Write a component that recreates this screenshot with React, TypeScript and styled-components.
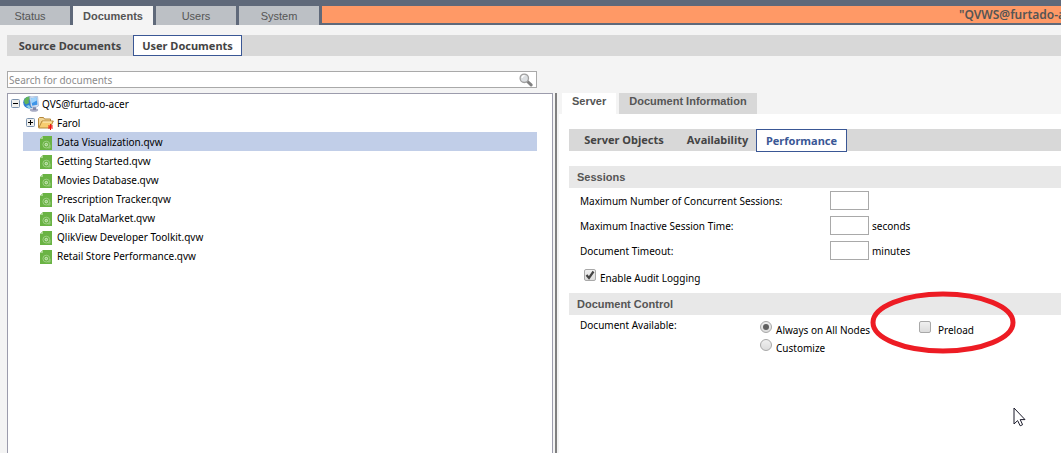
import React from "react";
import styled, { createGlobalStyle } from "styled-components";

const GlobalStyle = createGlobalStyle`
  *, *::before, *::after { box-sizing: border-box; }
  body {
    margin: 0;
    background: #f4f4f4;
    color: #000;
    font: 10px/14px "Noto Sans", "Open Sans", sans-serif;
    overflow: hidden;
  }
  button, input { font: inherit; color: inherit; margin: 0; padding: 0; }
  ul { list-style: none; margin: 0; padding: 0; }
`;

const Page = styled.div`
  display: flex;
  flex-direction: column;
  min-height: 100vh;
`;

const TopBar = styled.header`
  display: flex;
  gap: 3px;
  height: 25px;
  padding-top: 6px;
  background: #5f697a;
`;

const MainTab = styled.button<{ $active?: boolean; $first?: boolean }>`
  flex: none;
  width: ${(p) => (p.$first ? 70 : 80)}px;
  height: 19px;
  padding-right: ${(p) => (p.$first ? 10 : 0)}px;
  border: 0;
  background: ${(p) => (p.$active ? "#f4f4f4" : "#bcc0c5")};
  color: #555;
  font: ${(p) => (p.$active ? "bold " : "")}11px/18px "Liberation Sans", Arial, sans-serif;
`;

const Banner = styled.div`
  flex: 1;
  min-width: 0;
  height: 17px;
  display: flex;
  justify-content: flex-end;
  background: #ff9966;
`;

const BannerText = styled.span`
  width: 102px;
  overflow: hidden;
  white-space: nowrap;
  color: #555;
  font-size: 12px;
  font-weight: 600;
  line-height: 17px;
`;

const SubBar = styled.nav`
  display: flex;
  height: 21px;
  margin: 10px 0 0 7px;
  background: #d8d8d8;
`;

const PaneSubBar = styled(SubBar)`
  height: 22px;
  margin: 15px 0 0 10px;
`;

const SubTab = styled.button<{ $width: number; $active?: boolean; $blue?: boolean }>`
  flex: none;
  width: ${(p) => p.$width}px;
  height: ${(p) => (p.$blue ? 23 : 21)}px;
  border: 1px solid ${(p) => (p.$active ? "#3a5795" : "transparent")};
  background: ${(p) => (p.$active ? "#fff" : "transparent")};
  color: ${(p) => (p.$blue ? "#3a5795" : "#444")};
  font-size: 11px;
  font-weight: bold;
  line-height: 19px;
  white-space: nowrap;
`;

const Columns = styled.main`
  flex: 1;
  display: grid;
  grid-template-columns: minmax(0, 1fr) 506px;
  padding-top: 15px;
`;

const LeftColumn = styled.section`
  display: flex;
  flex-direction: column;
  gap: 5px;
  padding: 0 2px 0 7px;
`;

const SearchBox = styled.label`
  display: flex;
  align-items: center;
  height: 17px;
  margin-right: 16px;
  padding: 0 3px 0 1px;
  border: 1px solid #a9a9a9;
  background: #fff;
`;

const SearchInput = styled.input`
  flex: 1;
  min-width: 0;
  height: 15px;
  border: 0;
  outline: 0;
  background: transparent;
  &::placeholder { color: #8c8c8c; opacity: 1; }
`;

const Tree = styled.ul`
  && { padding: 0 15px 0 3px; }
  flex: 1;
  border: 1px solid #9c9cac;
  border-bottom: 0;
  background: #fff;
`;

const Branch = styled.ul`
  && { padding-left: 12px; }
`;

const TreeRow = styled.div<{ $selected?: boolean }>`
  display: flex;
  align-items: center;
  height: 19px;
  background: ${(p) => (p.$selected ? "#c1cee8" : "transparent")};
`;

const Expander = styled.button`
  width: 9px;
  height: 9px;
  border: 0;
  background: none;
  display: flex;
  margin-right: 3px;
`;

const FolderRow = styled(TreeRow)`
  padding-left: 3px;
`;

const IconSlot = styled.span<{ $doc?: boolean }>`
  display: flex;
  justify-content: center;
  width: ${(p) => (p.$doc ? 34 : 16)}px;
  padding: ${(p) => (p.$doc ? "2px 0 0 12px" : "0")};
  margin-right: ${(p) => (p.$doc ? 0 : 3)}px;
`;

const RightColumn = styled.section`
  position: relative;
  display: flex;
  flex-direction: column;
  margin-top: 22px;
  border-left: 2px solid #808080;
`;

const PaneTabs = styled.nav`
  display: flex;
  gap: 3px;
  height: 21px;
  padding-left: 5px;
`;

const PaneTab = styled.button<{ $active?: boolean }>`
  height: 21px;
  padding: 0 10px 4px;
  border: 0;
  background: ${(p) => (p.$active ? "#fff" : "#d8d8d8")};
  color: #555;
  font: bold 11px/17px "Liberation Sans", Arial, sans-serif;
  white-space: nowrap;
`;

const Pane = styled.div`
  flex: 1;
  margin-left: 2px;
  background: #fff;
`;

const SectionTitle = styled.h2`
  height: 22px;
  margin: 0 0 0 10px;
  padding-left: 8px;
  background: #e8e8e8;
  color: #555;
  font: bold 11px/22px "Liberation Sans", Arial, sans-serif;
`;

const Sessions = styled.section`
  padding-top: 15px;
`;

const Fields = styled.div`
  display: flex;
  flex-direction: column;
  gap: 6px;
  padding: 3px 0 0 21px;
`;

const Field = styled.label`
  display: grid;
  grid-template-columns: 250px 39px auto;
  align-items: center;
  height: 19px;
`;

const NumberInput = styled.input`
  width: 39px;
  height: 19px;
  border: 1px solid #a9a9a9;
  background: #fff;
`;

const Unit = styled.span`
  padding-left: 3px;
`;

const Option = styled.label<{ $gap: number }>`
  display: flex;
  align-items: flex-start;
  gap: ${(p) => p.$gap}px;
  height: 18px;
  white-space: nowrap;
`;

const OptionText = styled.span`
  padding-top: 2px;
`;

const AuditOption = styled(Option)`
  height: 24px;
  margin: 9px 0 0 25px;
`;

const Tick = styled.input`
  appearance: none;
  position: relative;
  flex: none;
  width: 12px;
  height: 12px;
  border: 1px solid #a8a8a8;
  border-radius: 2px;
  background: linear-gradient(#f0f0f0, #dcdcdc);
  &[type="radio"] { border-radius: 50%; }
  &[type="radio"]:checked::after {
    content: "";
    position: absolute;
    inset: 2px;
    border-radius: 50%;
    background: #606060;
  }
`;

const TickWrap = styled.span`
  position: relative;
  display: flex;
  svg { position: absolute; left: 1px; top: 0; pointer-events: none; }
`;

const Availability = styled.div`
  display: grid;
  grid-template-columns: 180px 159px auto;
  padding: 3px 0 0 21px;
`;

const OptionList = styled.div`
  padding-top: 3px;
`;

const PreloadCell = styled.div`
  position: relative;
  padding-top: 3px;
`;

const Highlight = styled.svg`
  position: absolute;
  left: -49px;
  top: -27px;
  pointer-events: none;
`;

const Pointer = styled.svg`
  position: absolute;
  left: 456px;
  top: 314px;
  pointer-events: none;
`;

function Magnifier() {
  return (
    <svg width="14" height="14" viewBox="0 0 14 14" aria-hidden="true">
      <path d="M8.5 8.5l3.6 3.4" stroke="#808080" strokeWidth="3" strokeLinecap="round" />
      <circle cx="5.3" cy="5.3" r="4.2" fill="#dcdfe2" stroke="#a0a0a0" strokeWidth="1.3" />
      <path d="M3 5a2.6 2.6 0 0 1 2.6-2.4" fill="none" stroke="#fff" strokeWidth="1.2" />
    </svg>
  );
}

function PlusMinus({ open }: { open?: boolean }) {
  return (
    <svg width="9" height="9" viewBox="0 0 9 9" aria-hidden="true">
      <rect x="0.5" y="0.5" width="8" height="8" rx="1" fill="#f1f1ee" stroke="#7b92ae" />
      <path d={open ? "M2 4.5h5" : "M2 4.5h5M4.5 2v5"} stroke="#000" />
    </svg>
  );
}

function ServerIcon() {
  return (
    <svg width="16" height="16" viewBox="0 0 16 16" aria-hidden="true">
      <circle cx="6.2" cy="6.5" r="6" fill="#2f7fd0" />
      <path d="M1 4Q3 .6 6.5.6L8 2 5.5 4.5 6 7 3 8.5 1.5 7z" fill="#62b45a" />
      <path d="M3 10l3-1 2 3-2 .5z" fill="#8fd0e8" />
      <ellipse cx="11" cy="14" rx="4.2" ry="1.8" fill="#a8acc4" />
      <path d="M10 11h3v3h-3z" fill="#8389a8" />
      <path d="M6.5 1L14.6.4l.9 9.4-2 1.4-5.4-.2z" fill="#d9e3f2" stroke="#8ca4ca" strokeWidth=".6" />
      <path d="M7.7 2.2l6-.6.7 7.2-5.2.9z" fill="#3e95e8" />
      <path d="M7.7 2.2l6-.6.2 3-5.7 3z" fill="#9cd2fb" />
    </svg>
  );
}

function FolderIcon() {
  return (
    <svg width="16" height="14" viewBox="0 0 16 14" aria-hidden="true">
      <path d="M.5 11.5v-9l1-1h4l1 1.5h6v2" fill="#f2d694" stroke="#b4873b" />
      <path d="M.7 12L4 5h11.3l-3.2 7z" fill="#f6cd70" stroke="#b4873b" />
      <path d="M4.7 6h9" stroke="#fff1c4" />
      <path d="M12.5 8v6M10 11h5M10.5 9l4 4M14.5 9l-4 4" stroke="#f01515" />
    </svg>
  );
}

function DocumentIcon() {
  return (
    <svg width="12" height="14" viewBox="0 0 12 14" aria-hidden="true">
      <path d="M3 0h9v14H0V3z" fill="#6ab344" />
      <path d="M0 3L3 0v3z" fill="#a7d58d" />
      <circle cx="6.3" cy="8.6" r="3.4" fill="none" stroke="#a3d189" strokeWidth="0.9" />
      <circle cx="6.3" cy="8.6" r="1.3" fill="#8cc76c" stroke="#d8efcb" strokeWidth="0.9" />
      <path d="M7.5 11.9H10V9" fill="none" stroke="#a3d189" strokeWidth="0.9" />
    </svg>
  );
}

const documents = [
  "Data Visualization.qvw",
  "Getting Started.qvw",
  "Movies Database.qvw",
  "Prescription Tracker.qvw",
  "Qlik DataMarket.qvw",
  "QlikView Developer Toolkit.qvw",
  "Retail Store Performance.qvw",
];

const sessionFields = [
  { label: "Maximum Number of Concurrent Sessions:", unit: "" },
  { label: "Maximum Inactive Session Time:", unit: "seconds" },
  { label: "Document Timeout:", unit: "minutes" },
];

export default function App() {
  return (
    <>
      <GlobalStyle />
      <Page>
        <TopBar>
          <MainTab $first>Status</MainTab>
          <MainTab $active>Documents</MainTab>
          <MainTab>Users</MainTab>
          <MainTab>System</MainTab>
          <Banner>
            <BannerText>"QVWS@furtado-acer"</BannerText>
          </Banner>
        </TopBar>
        <SubBar>
          <SubTab $width={126}>Source Documents</SubTab>
          <SubTab $width={109} $active>User Documents</SubTab>
        </SubBar>
        <Columns>
          <LeftColumn>
            <SearchBox>
              <SearchInput type="text" aria-label="Search for documents" placeholder="Search for documents" />
              <Magnifier />
            </SearchBox>
            <Tree>
              <li>
                <TreeRow>
                  <Expander aria-label="Collapse server"><PlusMinus open /></Expander>
                  <IconSlot><ServerIcon /></IconSlot>
                  QVS@furtado-acer
                </TreeRow>
                <Branch>
                  <li>
                    <FolderRow>
                      <Expander aria-label="Expand folder"><PlusMinus /></Expander>
                      <IconSlot><FolderIcon /></IconSlot>
                      Farol
                    </FolderRow>
                  </li>
                  {documents.map((name, i) => (
                    <li key={name}>
                      <TreeRow $selected={i === 0}>
                        <IconSlot $doc><DocumentIcon /></IconSlot>
                        {name}
                      </TreeRow>
                    </li>
                  ))}
                </Branch>
              </li>
            </Tree>
          </LeftColumn>
          <RightColumn>
            <PaneTabs>
              <PaneTab $active>Server</PaneTab>
              <PaneTab>Document Information</PaneTab>
            </PaneTabs>
            <Pane>
              <PaneSubBar>
                <SubTab $width={110}>Server Objects</SubTab>
                <SubTab $width={77}>Availability</SubTab>
                <SubTab $width={91} $active $blue>Performance</SubTab>
              </PaneSubBar>
              <Sessions>
                <SectionTitle>Sessions</SectionTitle>
                <Fields>
                  {sessionFields.map((f) => (
                    <Field key={f.label}>
                      <span>{f.label}</span>
                      <NumberInput type="text" />
                      <Unit>{f.unit}</Unit>
                    </Field>
                  ))}
                </Fields>
                <AuditOption $gap={4}>
                  <TickWrap>
                    <Tick type="checkbox" defaultChecked />
                    <svg width="10" height="11" viewBox="0 0 10 11" aria-hidden="true">
                      <path d="M1.5 6l2.5 3L8.5 2.5" fill="none" stroke="#444" strokeWidth="2.2" />
                    </svg>
                  </TickWrap>
                  <OptionText>Enable Audit Logging</OptionText>
                </AuditOption>
              </Sessions>
              <section>
                <SectionTitle>Document Control</SectionTitle>
                <Availability>
                  <span>Document Available:</span>
                  <OptionList>
                    <Option $gap={4}>
                      <Tick type="radio" name="available" defaultChecked />
                      <OptionText>Always on All Nodes</OptionText>
                    </Option>
                    <Option $gap={4}>
                      <Tick type="radio" name="available" />
                      <OptionText>Customize</OptionText>
                    </Option>
                  </OptionList>
                  <PreloadCell>
                    <Option $gap={7}>
                      <Tick type="checkbox" />
                      <OptionText>Preload</OptionText>
                    </Option>
                    <Highlight width="146" height="63" viewBox="0 0 146 63" aria-hidden="true">
                      <ellipse cx="73" cy="31.5" rx="70" ry="28.5" fill="none" stroke="#ed1c24" strokeWidth="5" />
                    </Highlight>
                  </PreloadCell>
                </Availability>
              </section>
            </Pane>
            <Pointer width="13" height="20" viewBox="0 0 13 20" aria-hidden="true">
              <path d="M1 1v16l3.6-3.4 2.6 5.2 2.4-1.1L7.2 12.6H12z" fill="#fff" stroke="#1b1b2b" />
            </Pointer>
          </RightColumn>
        </Columns>
      </Page>
    </>
  );
}
